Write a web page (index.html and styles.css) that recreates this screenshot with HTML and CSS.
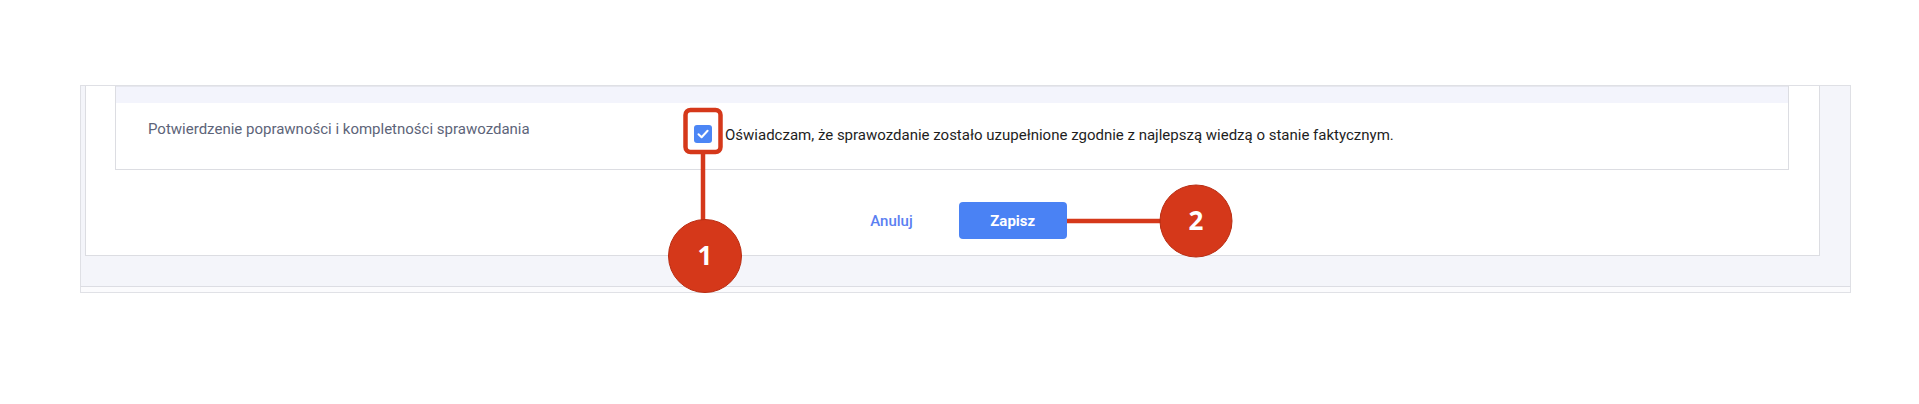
FILE: index.html
```html
<!DOCTYPE html>
<html lang="pl">
<head>
<meta charset="utf-8">
<link rel="stylesheet" href="styles.css">
</head>
<body>
<div class="shell">
  <div class="frame">
    <div class="panel">
      <div class="card">
        <div class="card-head"></div>
        <div class="card-body">
          <div class="label">Potwierdzenie poprawności i kompletności sprawozdania</div>
          <label class="confirm">
            <span class="checkbox">
              <svg width="18" height="18" viewBox="0 0 18 18"><path d="M4.5 9.3 L7.6 12.3 L13.6 5.8" fill="none" stroke="#fff" stroke-width="2" stroke-linecap="round" stroke-linejoin="round"/></svg>
            </span>
            <span class="confirm-text">Oświadczam, że sprawozdanie zostało uzupełnione zgodnie z najlepszą wiedzą o stanie faktycznym.</span>
          </label>
        </div>
      </div>
      <div class="actions">
        <button class="btn-link">Anuluj</button>
        <button class="btn-primary">Zapisz</button>
      </div>
    </div>
  </div>
  <div class="frame-foot"></div>
</div>
<svg class="annot" width="1919" height="404" viewBox="0 0 1919 404">
  <rect x="685.5" y="110" width="35" height="42" rx="5" ry="5" fill="none" stroke="#d5381a" stroke-width="4.5"/>
  <line x1="703" y1="152" x2="703" y2="222" stroke="#d5381a" stroke-width="4.5"/>
  <line x1="1067" y1="221" x2="1165" y2="221" stroke="#d5381a" stroke-width="4.5"/>
  <circle cx="705" cy="256" r="36.5" fill="#d5381a" stroke="#b92d12" stroke-width="1"/>
  <circle cx="1196" cy="221" r="36" fill="#d5381a" stroke="#b92d12" stroke-width="1"/>
  <text x="705" y="265" class="num">1</text>
  <text x="1196" y="230" class="num">2</text>
</svg>
</body>
</html>
```
FILE: styles.css
```css
* { box-sizing: border-box; }
html, body { margin: 0; padding: 0; background: #fff; }
body {
  position: relative;
  width: 1919px;
  height: 404px;
  overflow: hidden;
  font-family: Roboto, "Liberation Sans", sans-serif;
}
.shell {
  margin: 85px 0 0 80px;
  width: 1771px;
}
.frame {
  background: #f4f5fa;
  border: 1px solid #dfe0e5;
  border-bottom-color: #dcdde3;
  padding: 0 30px 30px 4px;
}
.frame-foot {
  height: 6px;
  border: 1px solid #e0e1e6;
  border-top: none;
  background: #fbfbfd;
}
.panel {
  background: #fff;
  border: 1px solid #dcdde2;
  border-top: none;
  height: 170px;
  padding: 0 30px 0 29px;
}
.card {
  border: 1px solid #dcdde2;
  border-top: none;
}
.card-head {
  height: 17px;
  background: #f3f4fc;
  border-top: 1px solid #e6e7ee;
}
.card-body {
  display: grid;
  grid-template-columns: 546px 1fr;
  height: 66px;
  padding: 0 0 0 32px;
}
.label {
  font-size: 15px;
  color: #5d6479;
  padding-top: 17px;
  line-height: 18px;
}
.confirm {
  display: flex;
  align-items: flex-start;
  gap: 13px;
  padding-top: 22px;
}
.checkbox {
  width: 18px;
  height: 18px;
  border-radius: 3px;
  background: #4c86f5;
  display: flex;
}
.confirm-text {
  font-size: 15px;
  color: #1e1e1e;
  line-height: 18px;
  padding-top: 1px;
}
.actions {
  display: flex;
  justify-content: center;
  align-items: center;
  gap: 30px;
  margin-top: 32px;
  padding-left: 17px;
}
.btn-link {
  background: none;
  border: none;
  padding: 0 16px;
  font-family: Roboto, "Liberation Sans", sans-serif;
  font-size: 15px;
  font-weight: 500;
  color: #5b80f2;
  height: 37px;
}
.btn-primary {
  width: 108px;
  height: 37px;
  border: none;
  border-radius: 4px;
  background: #4a82f4;
  color: #fff;
  font-family: Roboto, "Liberation Sans", sans-serif;
  font-size: 15px;
  font-weight: 700;
}
.annot {
  position: absolute;
  left: 0;
  top: 0;
}
.num {
  fill: #fff;
  font-family: "Open Sans", sans-serif;
  font-size: 26px;
  font-weight: 700;
  text-anchor: middle;
}
```
